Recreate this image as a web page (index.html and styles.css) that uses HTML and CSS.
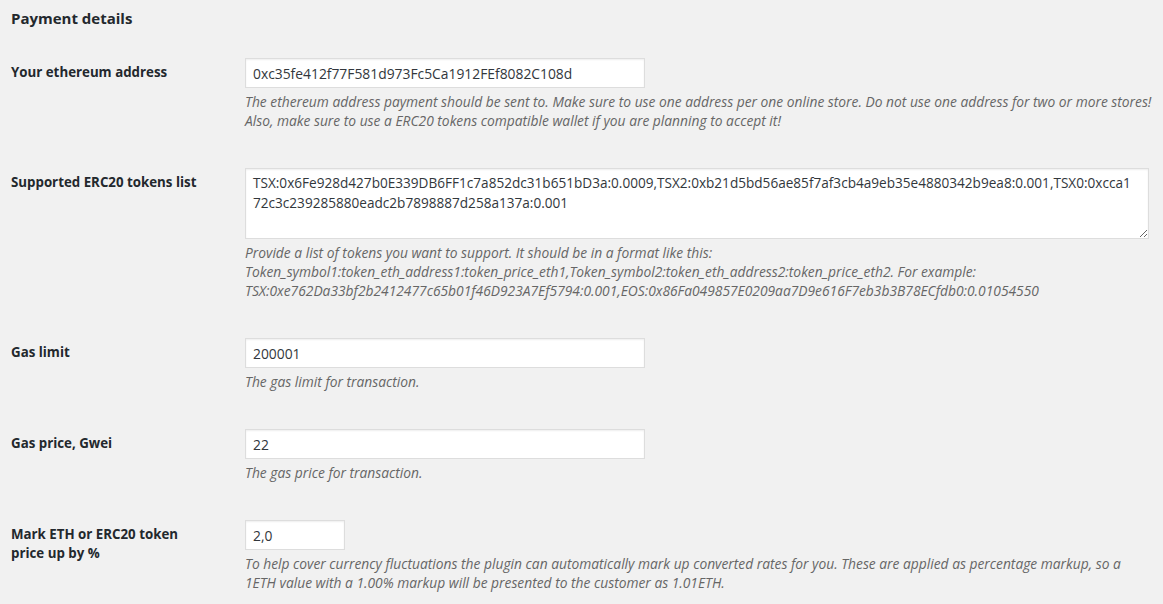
FILE: index.html
```html
<!DOCTYPE html>
<html lang="en">
<head>
<meta charset="utf-8">
<title>Payment details</title>
<link rel="stylesheet" href="styles.css">
</head>
<body>
<div class="wrap">
  <h2 class="title">Payment details</h2>
  <table class="form-table">
    <tbody>
      <tr>
        <th>Your ethereum address</th>
        <td>
          <input class="regular-text" type="text" value="0xc35fe412f77F581d973Fc5Ca1912FEf8082C108d">
          <p class="description">The ethereum address payment should be sent to. Make sure to use one address per one online store. Do not use one address for two or more stores!<br>Also, make sure to use a ERC20 tokens compatible wallet if you are planning to accept it!</p>
        </td>
      </tr>
      <tr>
        <th>Supported ERC20 tokens list</th>
        <td>
          <textarea class="large-text">TSX:0x6Fe928d427b0E339DB6FF1c7a852dc31b651bD3a:0.0009,TSX2:0xb21d5bd56ae85f7af3cb4a9eb35e4880342b9ea8:0.001,TSX0:0xcca1
72c3c239285880eadc2b7898887d258a137a:0.001</textarea>
          <p class="description">Provide a list of tokens you want to support. It should be in a format like this:<br>Token_symbol1:token_eth_address1:token_price_eth1,Token_symbol2:token_eth_address2:token_price_eth2. For example:<br>TSX:0xe762Da33bf2b2412477c65b01f46D923A7Ef5794:0.001,EOS:0x86Fa049857E0209aa7D9e616F7eb3b3B78ECfdb0:0.01054550</p>
        </td>
      </tr>
      <tr>
        <th>Gas limit</th>
        <td>
          <input class="regular-text" type="text" value="200001">
          <p class="description">The gas limit for transaction.</p>
        </td>
      </tr>
      <tr>
        <th>Gas price, Gwei</th>
        <td>
          <input class="regular-text" type="text" value="22">
          <p class="description">The gas price for transaction.</p>
        </td>
      </tr>
      <tr>
        <th>Mark ETH or ERC20 token price up by %</th>
        <td>
          <input class="small-text" type="text" value="2,0">
          <p class="description">To help cover currency fluctuations the plugin can automatically mark up converted rates for you. These are applied as percentage markup, so a<br>1ETH value with a 1.00% markup will be presented to the customer as 1.01ETH.</p>
        </td>
      </tr>
    </tbody>
  </table>
</div>
</body>
</html>
```
FILE: styles.css
```css
html, body {
  margin: 0;
  padding: 0;
  background: #f1f1f1;
  overflow: hidden;
}

body {
  font-family: "Open Sans", "Noto Sans", sans-serif;
  color: #23282d;
  font-size: 13px;
}

.wrap {
  padding: 0 4px 0 11px;
}

.title {
  font-size: 15px;
  font-weight: 700;
  line-height: 22px;
  margin: 7px 0 14px;
  color: #23282d;
}

.form-table {
  border-collapse: collapse;
  table-layout: fixed;
  width: 100%;
}

.form-table th {
  width: 200px;
  padding: 20px 24px 20px 0;
  text-align: left;
  vertical-align: top;
  font-size: 13.3px;
  font-weight: 700;
  line-height: 18.5px;
  color: #23282d;
}

.form-table td {
  padding: 15px 10px;
  vertical-align: top;
}

.regular-text,
.small-text,
.large-text {
  display: block;
  box-sizing: border-box;
  margin: 0;
  border: 1px solid #ddd;
  background: #fff;
  box-shadow: inset 0 1px 2px rgba(0, 0, 0, 0.07);
  font-family: inherit;
  font-size: 13.85px;
  color: #32373c;
  outline: none;
}

.regular-text,
.small-text {
  height: 30px;
  padding: 0 7px;
}

.regular-text {
  width: 400px;
}

.small-text {
  width: 100px;
}

.large-text {
  width: 100%;
  height: 71px;
  padding: 4px 7px;
  font-size: 13.6px;
  line-height: 20px;
  resize: vertical;
}

.description {
  margin: 4px 0 8px;
  font-size: 13.8px;
  line-height: 19px;
  font-style: italic;
  color: #666;
  white-space: nowrap;
}
```
